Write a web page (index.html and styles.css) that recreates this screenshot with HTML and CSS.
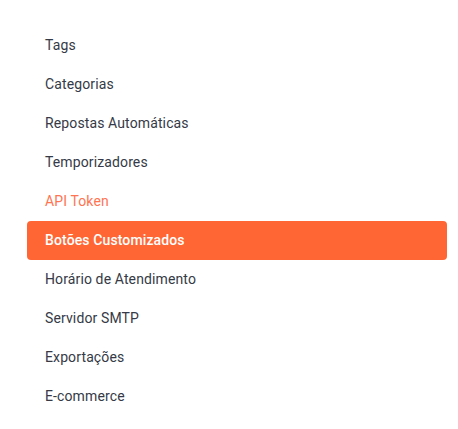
FILE: index.html
```html
<!DOCTYPE html>
<html lang="pt">
<head>
<meta charset="utf-8">
<link rel="stylesheet" href="styles.css">
</head>
<body>
<nav class="menu">
  <a class="item">Tags</a>
  <a class="item">Categorias</a>
  <a class="item">Repostas Automáticas</a>
  <a class="item">Temporizadores</a>
  <a class="item hover">API Token</a>
  <a class="item active">Botões Customizados</a>
  <a class="item">Horário de Atendimento</a>
  <a class="item">Servidor SMTP</a>
  <a class="item">Exportações</a>
  <a class="item">E-commerce</a>
</nav>
</body>
</html>
```
FILE: styles.css
```css
html, body {
  margin: 0;
  padding: 0;
  background: #ffffff;
}
body {
  font-family: Roboto, "Liberation Sans", sans-serif;
}
.menu {
  display: flex;
  flex-direction: column;
  width: 420px;
  margin: 26px 0 0 27px;
}
.item {
  display: flex;
  align-items: center;
  box-sizing: border-box;
  height: 39px;
  padding: 0 18px 2px;
  font-size: 14px;
  letter-spacing: 0.12px;
  color: #353a46;
  border-radius: 4px;
}
.item.hover {
  color: #ff7452;
}
.item.active {
  background: #ff6633;
  color: #ffffff;
  font-weight: 500;
}
```
